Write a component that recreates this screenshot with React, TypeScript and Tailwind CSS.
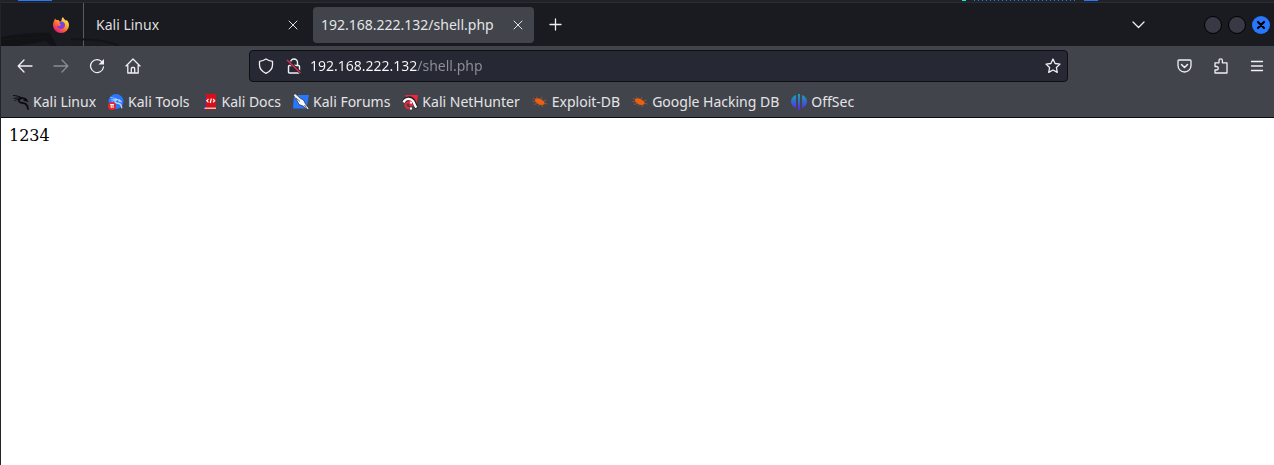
import { useState } from "react";
import type { ReactNode } from "react";

const line = {
  fill: "none",
  stroke: "currentColor",
  strokeLinecap: "round",
  strokeLinejoin: "round",
} as const;

function Icon({ children, className = "size-4" }: { children: ReactNode; className?: string }) {
  return (
    <svg viewBox="0 0 16 16" className={`${className} shrink-0`} aria-hidden="true">
      {children}
    </svg>
  );
}

function FirefoxLogo() {
  return (
    <Icon>
      <defs>
        <linearGradient id="fx" x1="0.85" y1="0.1" x2="0.2" y2="0.95">
          <stop offset="0" stopColor="#fff44f" />
          <stop offset="0.35" stopColor="#ffa436" />
          <stop offset="0.65" stopColor="#ff5a36" />
          <stop offset="1" stopColor="#e31587" />
        </linearGradient>
      </defs>
      <path
        d="M10 0c.3 1.200 1 2 2 2.800.5.300.8.700 1 1.200.4-.300.5-.700.5-1.200C15 4.200 16 6.200 16 8.300a8 7.700 0 0 1-16 0C0 6.200.5 4.500 1.500 3.200c0-.700.2-1.200.6-1.700.3.700.8 1.200 1.400 1.500.8-.100 1.600 0 2.300.300L7 5l1.500-1.500C8.500 2 9 .800 10 0Z"
        fill="url(#fx)"
      />
      <path d="M7.500 4.500c2.500-.500 4.500 1 4.500 3.500s-2 4-4.200 4C5.500 12 4 10.500 4 8.500c1 .700 2 .800 3 .200.800-.400 1-.800 1.500-1.200-1 .100-2-.300-2-1 0-.800.5-1.500 1-2Z" fill="#7642e5" />
    </Icon>
  );
}

function Dragon({ color }: { color: string }) {
  return (
    <g fill="none" stroke={color} strokeLinecap="round">
      <path d="M.5 1.500c3 .2 6 .8 9 2.700M1 4.500c2-.700 5-.800 8-.200M2 6.500c2-1.200 4-1.600 6-1.500" strokeWidth="1" />
      <path d="M7.500 4C4.500 6.500 6 9 9.500 9s5 2 5.500 6" strokeWidth="1.800" />
      <path d="M8.500 4c2 0 4.500.5 5.500 2.800l-3-.8" strokeWidth="1.600" />
    </g>
  );
}

function Bug() {
  return (
    <Icon>
      <path d="M3 5c2.500-1.500 5-.6 7 1 2 .8 3.200 2.300 2.500 4-1.800 1.600-4.800 1.200-6.800-.6C3.700 8.400 2.500 6.700 3 5Z" fill="#ee5f10" />
      <path d="m.5 7.500 3.500.3M2 10.500l3.500-1.200M6 12l1.500-2M10.500 13l-.5-2.500M9 5l1-1.800M12 6.800l2.500-.6M13 9.500l2.500.5M1 4.500l2.500 1M5 4l-.5-1.200" stroke="#a85a2c" strokeWidth=".8" fill="none" />
    </Icon>
  );
}

const bookmarks: { label: string; icon: ReactNode }[] = [
  { label: "Kali Linux", icon: <Icon><Dragon color="#0b0c0e" /></Icon> },
  {
    label: "Kali Tools",
    icon: (
      <Icon>
        <circle cx="8" cy="7.500" r="7.500" fill="#2777ff" />
        <g transform="translate(2.500 2.500) scale(.75)"><Dragon color="#b9d2ff" /></g>
        <circle cx="4" cy="12" r="4" fill="#e5252a" />
        <path d="M2.200 10.500h3.600M3.200 10.500V14M5 10.500V14" stroke="#fff" fill="none" />
      </Icon>
    ),
  },
  {
    label: "Kali Docs",
    icon: (
      <Icon>
        <path d="M2 1h2v14H2z" fill="#174a91" />
        <path d="M3.500 0H14v13.500H3.500z" fill="#d80f16" />
        <path d="M2.500 13.500H14V15H2.500z" fill="#d5c6c8" />
        <path d="M2 15.500h12" stroke="#b81218" />
        <path d="M6.500 5 4.800 6.700l1.700 1.700M11 5l1.700 1.700L11 8.400M9.300 4.500l-1 4.500" stroke="#fff" strokeWidth="1.200" fill="none" />
      </Icon>
    ),
  },
  {
    label: "Kali Forums",
    icon: (
      <Icon>
        <path d="M1 1h15l-2.500 13.500H0z" fill="#2777ff" />
        <path d="M0 .5 2.500 0l5 4.500 3 1.500 2 4 3.500 4.500-1.200 1L10 12l-4-1.500-2-4z" fill="#f8f8f8" stroke="#17191d" strokeWidth=".6" />
        <path d="m3 4 4 3.500M11.500 11l2 2.500" stroke="#222" strokeWidth=".7" />
      </Icon>
    ),
  },
  {
    label: "Kali NetHunter",
    icon: (
      <Icon>
        <path d="M3 1h13l-2 12L8 12z" fill="#ef263c" />
        <path d="M1.500 9C3 3.500 9 3 11.500 7c1.500 2.500 1.500 4.500 3.500 7" stroke="#202126" strokeWidth="4" fill="none" />
        <path d="M1.500 8.500C3.500 4 8.500 3.800 11 7.200c1.500 2.300 1.500 4.300 3.500 6.300" stroke="#fff" strokeWidth="2.400" fill="none" />
        <path d="M9 8.500C5.500 7.500 3.500 9 3.500 11s2 3.500 6 3.500" stroke="#ef263c" strokeWidth="2" fill="none" />
        <path d="m8 8.300 2 .7M8 14.500h2" stroke="#fff" strokeWidth="1.800" />
      </Icon>
    ),
  },
  { label: "Exploit-DB", icon: <Bug /> },
  { label: "Google Hacking DB", icon: <Bug /> },
  {
    label: "OffSec",
    icon: (
      <Icon>
        <defs>
          <linearGradient id="offsec" gradientUnits="userSpaceOnUse" x1="0" y1="0" x2="0" y2="16">
            <stop offset="0" stopColor="#13a5b5" />
            <stop offset="1" stopColor="#5b25e5" />
          </linearGradient>
        </defs>
        <path d="M5 1v13C2 13 0 10.500 0 7.500S2 2 5 1ZM7 0h2v16H7ZM11 1c3 1 5 3.500 5 6.500S14 13 11 14Z" fill="url(#offsec)" />
      </Icon>
    ),
  },
];

function CloseIcon() {
  return (
    <Icon>
      <path d="m4 4 8 8M12 4l-8 8" {...line} />
    </Icon>
  );
}

function ToolButton({ label, disabled, children }: { label: string; disabled?: boolean; children: ReactNode }) {
  return (
    <button
      type="button"
      aria-label={label}
      disabled={disabled}
      className="flex size-9 items-center justify-center rounded text-[#f0f0f3] disabled:text-[#8b8c91]"
    >
      {children}
    </button>
  );
}

function TabBar() {
  return (
    <div className="relative flex h-11 items-center border-t border-[#2b2d33] bg-[#1a1b20]">
      <svg viewBox="0 0 130 14" className="absolute bottom-0 left-0 h-3.5 w-[130px]" aria-hidden="true">
        <path d="M0 5C16 2 34 0 49 1l7 13h-6l-5-5-28 5H0Z" fill="#121317" />
        <path d="m0 8 44-3" fill="none" stroke="#17181c" />
        <path d="M70 7c20 0 38 2 48 7" fill="none" stroke="#131418" strokeWidth="2" />
      </svg>
      <div className="flex h-full w-[83px] shrink-0 items-center justify-end border-r border-[#5b5b62] pr-3.5">
        <FirefoxLogo />
      </div>
      <div className="flex h-9 w-[229px] items-center justify-between px-3 text-[#dededf]">
        <button type="button" className="truncate">Kali Linux</button>
        <button type="button" aria-label="Close Kali Linux"><CloseIcon /></button>
      </div>
      <div className="flex h-9 w-[221px] items-center justify-between rounded bg-[#42444c] px-2 text-[#e4e4e6]">
        <button type="button" className="truncate">192.168.222.132/shell.php</button>
        <button type="button" aria-label="Close 192.168.222.132/shell.php"><CloseIcon /></button>
      </div>
      <button type="button" aria-label="New tab" className="ml-3.5 text-[#f0f0f3]">
        <Icon>
          <path d="M7.500 2v11M2 7.500h11" {...line} strokeWidth={1.3} />
        </Icon>
      </button>
      <div className="ml-auto flex items-center gap-1.5 pr-1 text-[#f0f0f3]">
        <button type="button" aria-label="List all tabs" className="mr-13">
          <Icon>
            <path d="m3 5 5.500 5.500L14 5" {...line} strokeWidth={1.3} />
          </Icon>
        </button>
        <button type="button" aria-label="Minimize" className="size-[18px] rounded-full border border-black bg-[#373a45]" />
        <button type="button" aria-label="Maximize" className="size-[18px] rounded-full border border-black bg-[#373a45]" />
        <button type="button" aria-label="Close window" className="flex size-[18px] items-center justify-center rounded-full bg-[#2777ff] text-black">
          <Icon>
            <path d="m5 5 6 6M11 5l-6 6" {...line} strokeWidth={2.2} />
          </Icon>
        </button>
      </div>
    </div>
  );
}

function NavBar() {
  const [url, setUrl] = useState("192.168.222.132/shell.php");

  return (
    <div className="flex h-10 items-center pl-1.5">
      <ToolButton label="Back">
        <Icon><path d="M15 8H1.500M7 2 1.200 8 7 14" {...line} strokeWidth={1.3} /></Icon>
      </ToolButton>
      <ToolButton label="Forward" disabled>
        <Icon><path d="M1 8h13.500M9 2l5.800 6L9 14" {...line} strokeWidth={1.3} /></Icon>
      </ToolButton>
      <ToolButton label="Reload">
        <Icon>
          <path d="M13.500 4.500A6.500 6.500 0 1 0 14.500 9" {...line} strokeWidth={1.3} />
          <path d="M15 1v5.500H9.500Z" fill="currentColor" />
        </Icon>
      </ToolButton>
      <ToolButton label="Home">
        <Icon>
          <path d="m1 8 7-7 7 7M2.800 7v8h10.400V7M6.300 15v-4.500c0-.500.400-1 1-1h1.400c.600 0 1 .5 1 1V15" {...line} strokeWidth={1.3} />
        </Icon>
      </ToolButton>

      <div className="flex-[5]" />
      <div className="flex h-8 flex-[41] items-center rounded border border-[#0e0f13] bg-[#262834] pr-1.5 pl-2 text-[#f0f0f3]">
        <Icon>
          <path d="M8 1c2 1.400 4 2 6.500 2.300V7c0 3.700-2.500 6.500-6.500 8.300C4 13.500 1.500 10.700 1.500 7V3.300C4 3 6 2.400 8 1Z" {...line} strokeWidth={1.3} />
        </Icon>
        <Icon className="ml-3 size-4">
          <path d="M4.500 7V4.500a3.500 3.500 0 0 1 7 0V7M3.500 7.500h9c.7 0 1 .3 1 1V14c0 .7-.3 1-1 1h-9c-.7 0-1-.3-1-1V8.500c0-.7.300-1 1-1Z" {...line} strokeWidth={1.4} />
          <path d="m1 2 14 13" stroke="#262834" strokeWidth="3" />
          <path d="m1 2 13.500 13" stroke="#e22850" strokeWidth="1.400" />
        </Icon>
        <input
          type="text"
          aria-label="Address"
          value={url}
          onChange={(e) => setUrl(e.target.value)}
          className="ml-2 min-w-0 flex-1 bg-[linear-gradient(to_right,#fbfbfe_107px,#8f9097_107px)] bg-clip-text text-transparent outline-none"
        />
        <button type="button" aria-label="Bookmark this page">
          <Icon>
            <path d="m8 1 2.100 4.500 4.900.6-3.600 3.400.9 4.900L8 12l-4.300 2.400.9-4.900L1 6.100l4.900-.600Z" {...line} strokeWidth={1.3} />
          </Icon>
        </button>
      </div>
      <div className="flex-[5]" />

      <ToolButton label="Save to Pocket">
        <Icon>
          <path d="M3 2h11c.7 0 1 .4 1 1v4.500a6.500 6.500 0 0 1-13 0V3c0-.6.300-1 1-1Z" {...line} strokeWidth={1.3} />
          <path d="m5.500 6.500 3 3 3-3" {...line} strokeWidth={1.5} />
        </Icon>
      </ToolButton>
      <ToolButton label="Extensions">
        <Icon>
          <path d="M3 4.800h4V2.500a1.700 1.700 0 0 1 3.400 0v2.300H15V15H3v-3h1.500a1.700 1.700 0 0 0 0-3.500H3Z" {...line} strokeWidth={1.3} />
        </Icon>
      </ToolButton>
      <ToolButton label="Menu">
        <Icon><path d="M3.500 3.500h11M3.500 8h11M3.500 12.500h11" {...line} strokeWidth={1.3} /></Icon>
      </ToolButton>
    </div>
  );
}

export default function App() {
  return (
    <div className="flex min-h-screen flex-col border-l border-[#22232c] bg-white font-['Noto_Sans',sans-serif] text-sm">
      <header className="bg-[#42444c]">
        <div className="flex h-0.5 items-start bg-[#20222a]">
          <div className="ml-[17px] h-px w-[34px] bg-[#2777ff]" />
          <div className="mr-44 ml-auto flex h-px gap-2">
            <div className="w-1 bg-[#00f5cc]" />
            <div className="w-[102px] bg-[repeating-linear-gradient(to_right,#2777ff_0_1px,transparent_1px_4px)]" />
            <div className="w-3.5 bg-[#2777ff]" />
          </div>
        </div>
        <TabBar />
        <NavBar />
        <nav className="flex h-8 items-center gap-3 border-b border-[#0c0c10] pl-3 text-[#e4e4e6]">
          {bookmarks.map((b) => (
            <a key={b.label} href="#" className="flex items-center gap-1 whitespace-nowrap">
              {b.icon}
              {b.label}
            </a>
          ))}
        </nav>
      </header>
      <main className="flex-1 p-2 font-['DejaVu_Serif',serif] text-base leading-[19px] text-black">1234</main>
    </div>
  );
}
